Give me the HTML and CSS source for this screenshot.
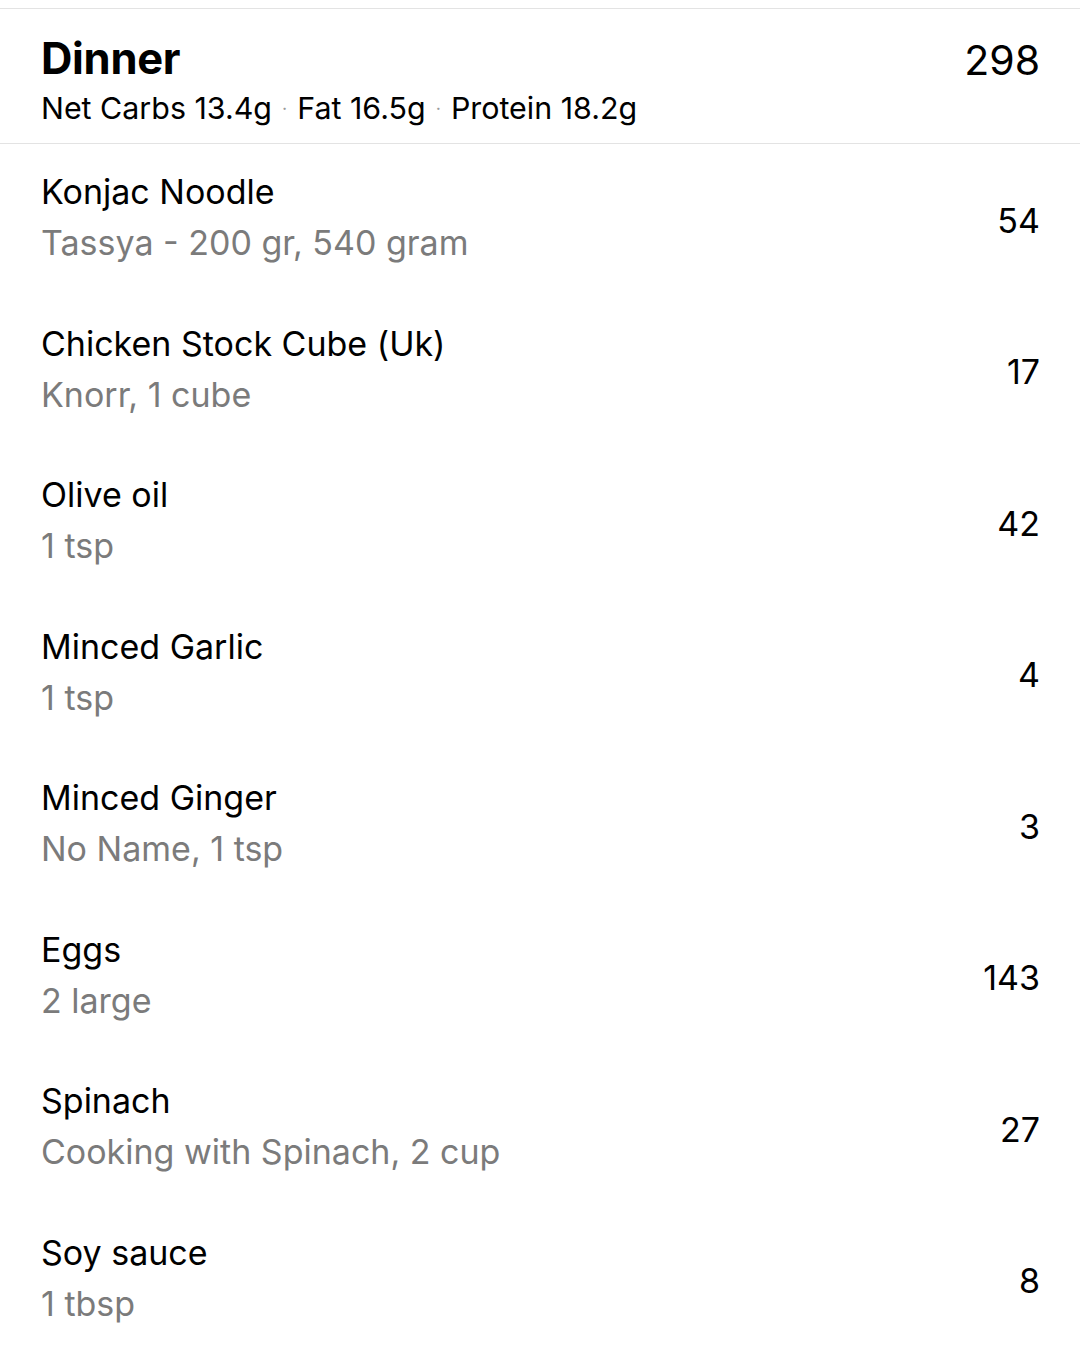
FILE: index.html
```html
<!DOCTYPE html>
<html>
<head>
<meta charset="utf-8">
<link rel="stylesheet" href="styles.css">
</head>
<body>
<div class="page">
  <div class="header">
    <div class="header-text">
      <div class="title">Dinner</div>
      <div class="macros">Net Carbs 13.4g <span class="dot">·</span> Fat 16.5g <span class="dot">·</span> Protein 18.2g</div>
    </div>
    <div class="total">298</div>
  </div>
  <div class="list">
    <div class="row"><div class="info"><div class="name">Konjac Noodle</div><div class="sub">Tassya - 200 gr, 540 gram</div></div><div class="cal">54</div></div>
    <div class="row"><div class="info"><div class="name">Chicken Stock Cube (Uk)</div><div class="sub">Knorr, 1 cube</div></div><div class="cal">17</div></div>
    <div class="row"><div class="info"><div class="name">Olive oil</div><div class="sub">1 tsp</div></div><div class="cal">42</div></div>
    <div class="row"><div class="info"><div class="name">Minced Garlic</div><div class="sub">1 tsp</div></div><div class="cal">4</div></div>
    <div class="row"><div class="info"><div class="name">Minced Ginger</div><div class="sub">No Name, 1 tsp</div></div><div class="cal">3</div></div>
    <div class="row"><div class="info"><div class="name">Eggs</div><div class="sub">2 large</div></div><div class="cal">143</div></div>
    <div class="row"><div class="info"><div class="name">Spinach</div><div class="sub">Cooking with Spinach, 2 cup</div></div><div class="cal">27</div></div>
    <div class="row"><div class="info"><div class="name">Soy sauce</div><div class="sub">1 tbsp</div></div><div class="cal">8</div></div>
  </div>
</div>
</body>
</html>
```
FILE: styles.css
```css
html, body {
  margin: 0;
  padding: 0;
  background: #ffffff;
}
body {
  font-family: Inter, "Liberation Sans", Arial, sans-serif;
  color: #000;
  width: 1080px;
  height: 1365px;
  overflow: hidden;
}
.page {
  padding-top: 8px;
}
.header {
  border-top: 1px solid #e3e3e3;
  border-bottom: 1px solid #e3e3e3;
  height: 134px;
  box-sizing: content-box;
  display: flex;
  justify-content: space-between;
  align-items: flex-start;
  padding: 0 40px 0 41px;
}
.header-text {
  padding-top: 27px;
}
.title {
  font-size: 43.5px;
  font-weight: 700;
  line-height: 44px;
  letter-spacing: -0.3px;
}
.macros {
  font-size: 30.4px;
  line-height: 36px;
  margin-top: 10px;
}
.dot {
  color: #9a9a9a;
  font-size: 18px;
  vertical-align: 4px;
  margin: 0 1.5px;
}
.total {
  font-size: 41px;
  line-height: 44px;
  padding-top: 29px;
}
.list {
  display: flex;
  flex-direction: column;
}
.row {
  height: 151.5px;
  display: flex;
  align-items: center;
  justify-content: space-between;
  padding: 0 40px 0 41px;
}
.info {
  padding-bottom: 4px;
}
.name {
  font-size: 34px;
  line-height: 40px;
}
.sub {
  font-size: 34px;
  line-height: 40px;
  margin-top: 11px;
  color: #7b7b7b;
}
.cal {
  font-size: 34px;
  line-height: 40px;
  padding-top: 2px;
}
```
